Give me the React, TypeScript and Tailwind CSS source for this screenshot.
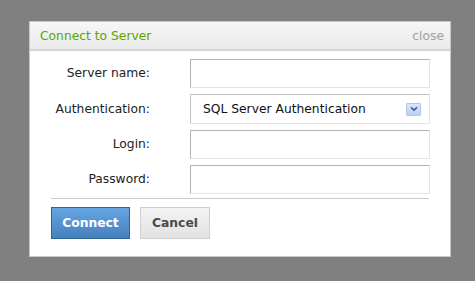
import { ChevronDown } from "lucide-react";

const font = { fontFamily: '"DejaVu Sans", Verdana, sans-serif' };

export default function App() {
  const rows = [
    { label: "Server name:", kind: "input" },
    { label: "Authentication:", kind: "select" },
    { label: "Login:", kind: "input" },
    { label: "Password:", kind: "input" },
  ];

  return (
    <div
      className="w-[475px] h-[281px] bg-[#808080] pt-[21px] pl-[29px] text-[12.3px]"
      style={font}
    >
      <div className="w-[422px] h-[236px] bg-white border border-[#c8c8c8] flex flex-col">
        <div className="h-[29px] flex items-center justify-between pl-[10px] pr-[6px] pt-[2px] border-b-2 border-[#d4d4d4] bg-gradient-to-b from-[#f7f7f7] to-[#e9e9e9]">
          <span className="text-[#5fa500]">Connect to Server</span>
          <span className="text-[#a0a0a0]">close</span>
        </div>

        <div className="flex flex-col gap-[6px] pt-[8px]">
          {rows.map((row) => (
            <div key={row.label} className="flex items-center">
              <div className="w-[120px] text-right text-[#222]">{row.label}</div>
              {row.kind === "select" ? (
                <div className="ml-[40px] w-[240px] h-[30px] flex items-center justify-between pl-[12px] pr-[8px] border border-t-[#c4c4c4] border-l-[#c4c4c4] border-b-[#e4e4e4] border-r-[#e4e4e4] text-[#111]">
                  <span>SQL Server Authentication</span>
                  <div className="w-[15px] h-[13px] flex items-center justify-center bg-gradient-to-b from-[#dbe6fa] to-[#bccff2] border border-[#b2c5ea] rounded-[1px]">
                    <ChevronDown className="w-[10px] h-[10px] text-[#3a5895]" strokeWidth={4} />
                  </div>
                </div>
              ) : (
                <div className="ml-[40px] w-[240px] h-[29px] border border-t-[#b4b4b4] border-l-[#b4b4b4] border-b-[#e4e4e4] border-r-[#e4e4e4]" />
              )}
            </div>
          ))}
        </div>

        <div className="mx-[21px] mt-[4px] border-t border-[#cccccc]" />

        <div className="flex gap-[10px] px-[21px] mt-[8px]">
          <button className="w-[79px] h-[32px] border border-[#2b6690] bg-gradient-to-b from-[#66a6e2] to-[#4580bd] text-white font-bold">
            Connect
          </button>
          <button className="w-[70px] h-[32px] border border-[#cfcfcf] bg-gradient-to-b from-[#f3f3f3] to-[#e2e2e2] text-[#4a4a4a] font-bold">
            Cancel
          </button>
        </div>
      </div>
    </div>
  );
}
